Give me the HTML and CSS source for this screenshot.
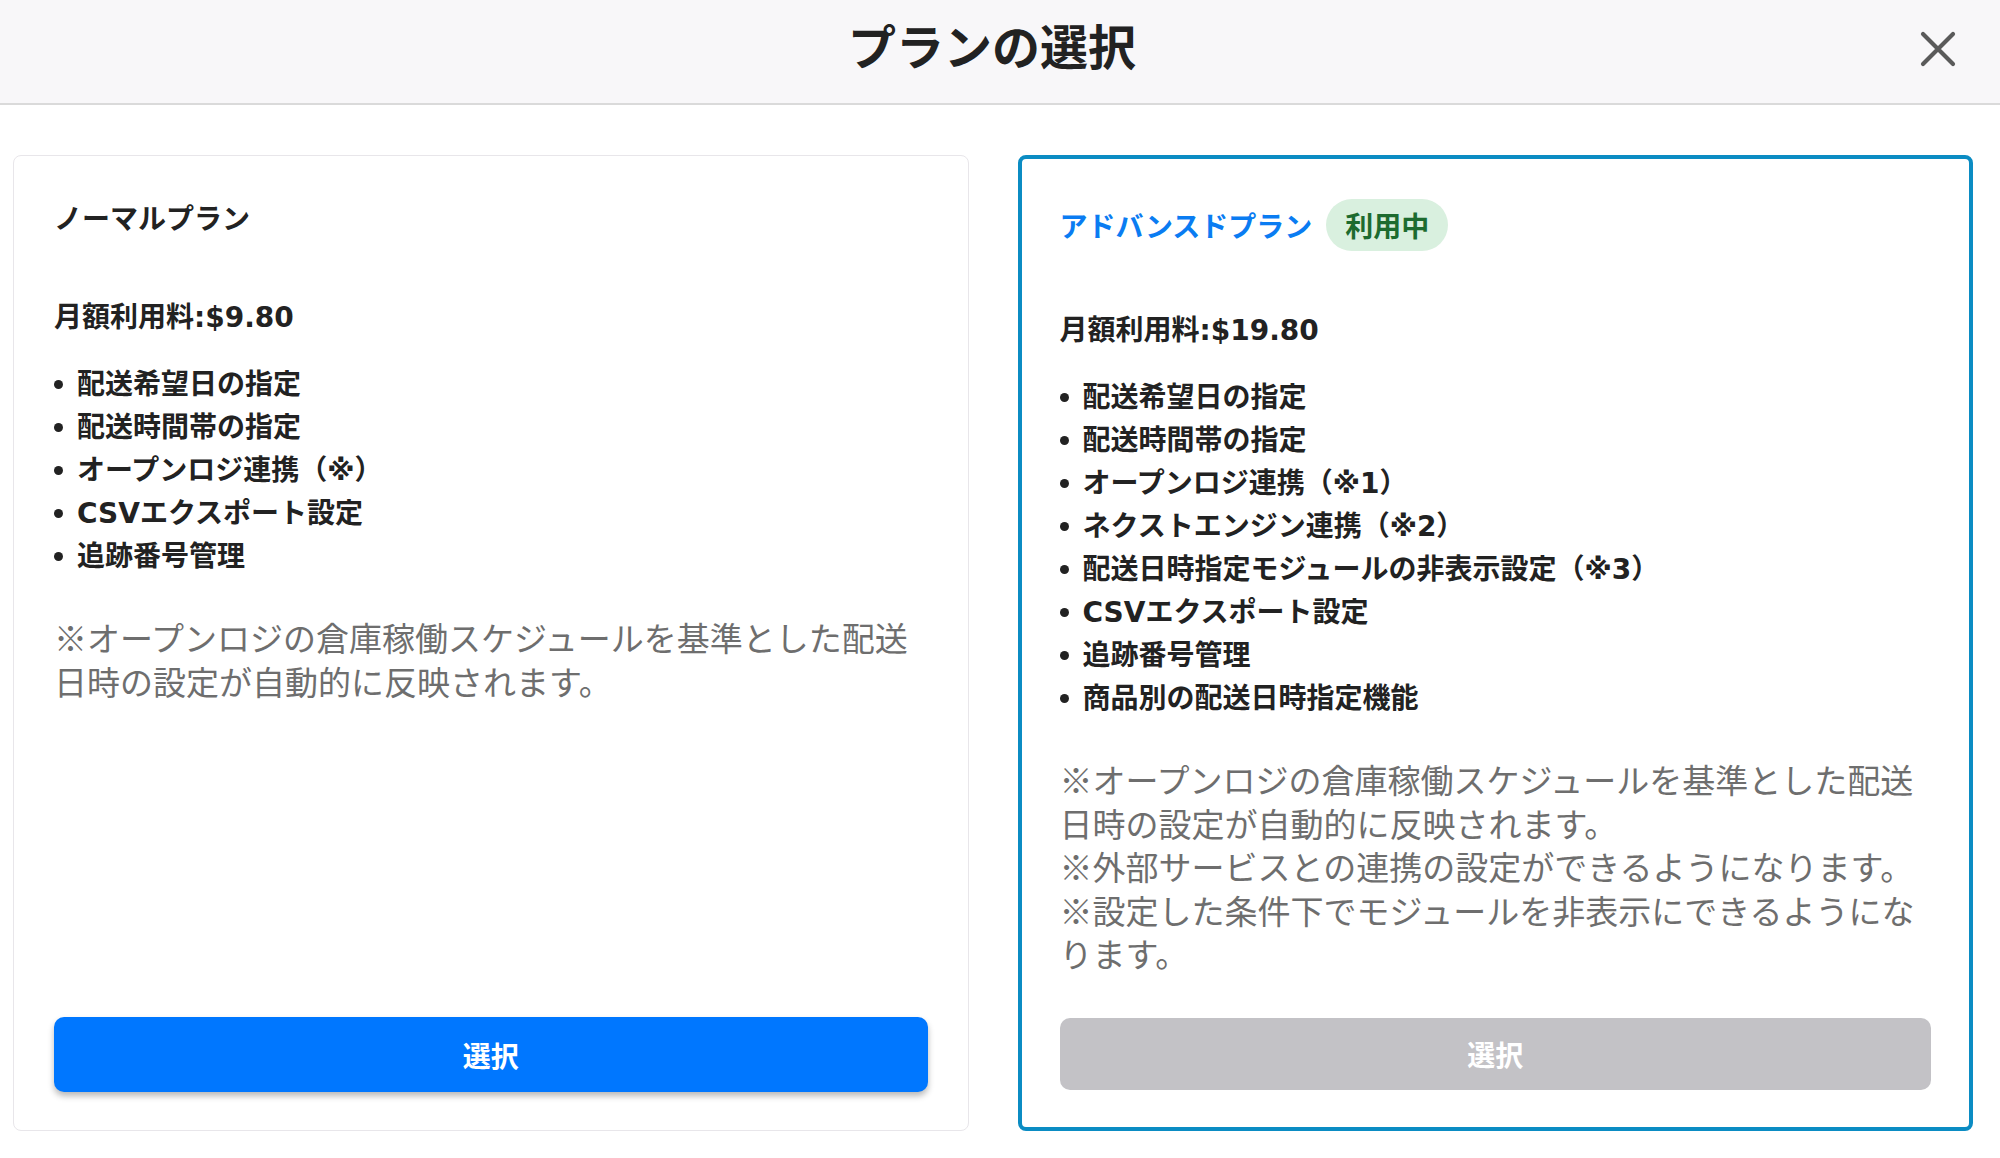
FILE: index.html
```html
<!DOCTYPE html>
<html lang="ja">
<head>
  <meta charset="UTF-8">
  <meta name="viewport" content="width=device-width, initial-scale=1.0">
  <title>プランの選択</title>
  <link rel="stylesheet" href="styles.css">
</head>
<body>

  <header class="modal-header">
    <div></div>
    <h1 class="modal-title">プランの選択</h1>
    <button class="close-btn" aria-label="閉じる">
      <svg width="36" height="36" viewBox="0 0 36 36">
        <path d="M3 3 L33 33 M33 3 L3 33" stroke="#5a5a5a" stroke-width="4.2" stroke-linecap="round" fill="none"/>
      </svg>
    </button>
  </header>

  <main class="plans">
    <section class="plan-card">
      <div class="plan-head">
        <h2 class="plan-name">ノーマルプラン</h2>
      </div>
      <p class="plan-price">月額利用料:$9.80</p>
      <ul class="feature-list">
        <li>配送希望日の指定</li>
        <li>配送時間帯の指定</li>
        <li>オープンロジ連携（※）</li>
        <li>CSVエクスポート設定</li>
        <li>追跡番号管理</li>
      </ul>
      <div class="plan-note">
        <p>※オープンロジの倉庫稼働スケジュールを基準とした配送日時の設定が自動的に反映されます。</p>
      </div>
      <button class="select-btn">選択</button>
    </section>

    <section class="plan-card plan-card--current">
      <div class="plan-head">
        <h2 class="plan-name plan-name--current">アドバンスドプラン</h2>
        <span class="badge">利用中</span>
      </div>
      <p class="plan-price">月額利用料:$19.80</p>
      <ul class="feature-list">
        <li>配送希望日の指定</li>
        <li>配送時間帯の指定</li>
        <li>オープンロジ連携（※1）</li>
        <li>ネクストエンジン連携（※2）</li>
        <li>配送日時指定モジュールの非表示設定（※3）</li>
        <li>CSVエクスポート設定</li>
        <li>追跡番号管理</li>
        <li>商品別の配送日時指定機能</li>
      </ul>
      <div class="plan-note">
        <p>※オープンロジの倉庫稼働スケジュールを基準とした配送日時の設定が自動的に反映されます。</p>
        <p>※外部サービスとの連携の設定ができるようになります。</p>
        <p>※設定した条件下でモジュールを非表示にできるようになります。</p>
      </div>
      <button class="select-btn" disabled>選択</button>
    </section>
  </main>

</body>
</html>
```

FILE: styles.css
```css
* {
  box-sizing: border-box;
}

body {
  display: flex;
  flex-direction: column;
  min-height: 100vh;
  margin: 0;
  font-family: "Noto Sans CJK JP", "Noto Sans", sans-serif;
  color: #222;
  background-color: #fff;
}

/* header */
.modal-header {
  display: grid;
  grid-template-columns: 1fr auto 1fr;
  align-items: center;
  height: 105px;
  padding: 0 44px 14px 28px;
  background-color: #f8f7f9;
  border-bottom: 2px solid #dadada;
}

.modal-title {
  margin: 0;
  font-size: 48px;
  font-weight: 700;
  line-height: 1.2;
  color: #222;
}

.close-btn {
  justify-self: end;
  width: 36px;
  height: 36px;
  margin-top: 8px;
  padding: 0;
  border: none;
  background: none;
  cursor: pointer;
}

.close-btn svg {
  display: block;
}

/* plan cards */
.plans {
  flex: 1;
  display: grid;
  grid-template-columns: 1fr 1fr;
  gap: 49px;
  padding: 50px 27px 27px 13px;
}

.plan-card {
  display: flex;
  flex-direction: column;
  padding: 40px 40px 38px;
  border: 1px solid #e8e6ea;
  border-radius: 8px;
  background-color: #fff;
}

.plan-card--current {
  border: 4px solid #0b8cc3;
  padding: 40px 38px 37px;
}

.plan-head {
  display: flex;
  align-items: center;
  gap: 14px;
  min-height: 42px;
}

.plan-name {
  margin: 0;
  font-size: 28px;
  font-weight: 700;
  line-height: 42px;
}

.plan-name--current {
  color: #0a7cf2;
}

.badge {
  display: inline-block;
  height: 52px;
  padding: 0 19px;
  border-radius: 26px;
  background-color: #d9f0df;
  color: #1d6b2f;
  font-size: 28px;
  font-weight: 700;
  line-height: 52px;
}

.plan-price {
  margin: 60px 0 0;
  font-family: "DejaVu Sans", "Noto Sans CJK JP", sans-serif;
  font-size: 28px;
  font-weight: 700;
  line-height: 40px;
}

.feature-list {
  list-style: none;
  margin: 25px 0 0;
  padding: 0;
}

.feature-list li {
  display: flex;
  align-items: center;
  font-family: "DejaVu Sans", "Noto Sans CJK JP", sans-serif;
  font-size: 28px;
  font-weight: 700;
  line-height: 43px;
}

.feature-list li::before {
  content: "";
  flex: none;
  width: 9px;
  height: 9px;
  margin-right: 14px;
  border-radius: 50%;
  background-color: #222;
}

.plan-note {
  margin-top: 38px;
  color: #6e6e6e;
  font-size: 33px;
  line-height: 43.5px;
}

.plan-note p {
  margin: 0;
}

/* buttons */
.select-btn {
  margin-top: auto;
  width: 100%;
  height: 75px;
  border: none;
  border-radius: 10px;
  background-color: #0077ff;
  color: #fff;
  font-family: inherit;
  font-size: 28px;
  font-weight: 700;
  cursor: pointer;
  box-shadow: 0 4px 6px rgba(0, 0, 0, 0.28);
}

.select-btn:disabled {
  height: 72px;
  background-color: #c3c2c6;
  box-shadow: none;
  cursor: default;
}
```
